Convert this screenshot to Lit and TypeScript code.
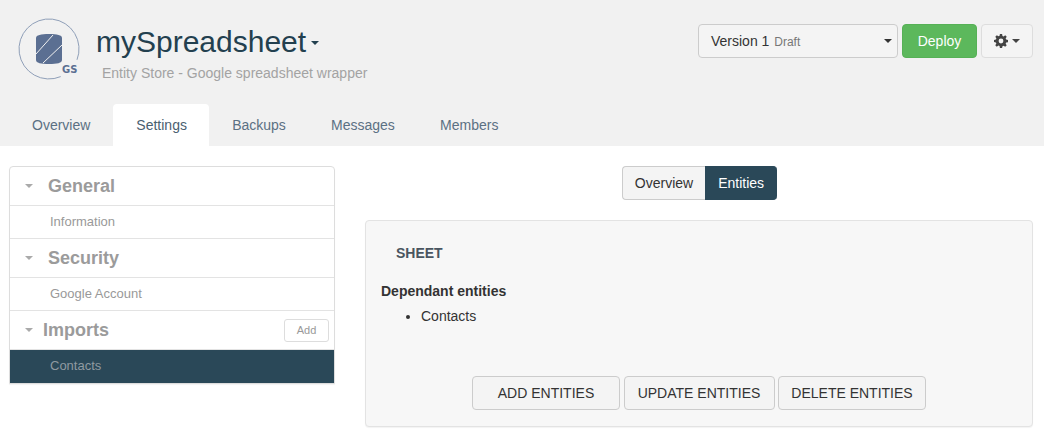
import { LitElement, html, css } from 'lit';
import { customElement } from 'lit/decorators.js';

const caret = html`<span class="caret"></span>`;

@customElement('app-root')
class AppRoot extends LitElement {
  static styles = css`
    :host {
      display: block;
      width: 1044px;
      height: 432px;
      overflow: hidden;
      background: #fff;
      font-family: "Liberation Sans", Arial, sans-serif;
      font-size: 14px;
      line-height: 20px;
      color: #333;
    }
    * { box-sizing: border-box; }
    .caret {
      display: inline-block;
      width: 0;
      height: 0;
      border-top: 4px solid currentColor;
      border-left: 4px solid transparent;
      border-right: 4px solid transparent;
    }

    .header { height: 146px; background: #f1f1f1; display: flex; flex-direction: column; }
    .top { height: 104px; display: flex; padding: 18px 11px 0 18px; }
    .logo { width: 64px; height: 64px; flex: none; }
    .titles { margin-left: 14px; flex: 1; }
    .title { font-size: 30px; line-height: 33px; margin-top: 7px; color: #23404f; display: flex; align-items: center; }
    .title .caret { margin-left: 5px; margin-top: 3px; }
    .sub { margin: 5px 0 0 6px; color: #a3a3a3; }
    .actions { display: flex; gap: 4px; margin-top: 6px; height: 34px; }
    .btn {
      height: 34px;
      border: 1px solid #ccc;
      border-radius: 4px;
      background: #f4f4f4;
      color: #333;
      display: flex;
      align-items: center;
      font: inherit;
      padding: 0 12px;
    }
    .version { width: 200px; padding: 0 5px 0 12px; justify-content: space-between; }
    .version small { font-size: 12px; color: #777; margin-left: 1px; }
    .deploy { width: 75px; justify-content: center; background: #5cb85c; border-color: #56b156; color: #fff; }
    .gear { width: 52px; border-color: #ddd; justify-content: center; gap: 4px; padding: 0; color: #444; }

    .tabs { display: flex; height: 42px; padding-left: 9px; color: #5b7083; }
    .tab { padding: 11px 22.2px 11px 23px; border-radius: 4px 4px 0 0; }
    .tab:first-child { padding-right: 23px; }
    .tab.on { background: #fff; color: #4a6070; }

    .body { display: flex; padding: 20px 11px 0 9px; gap: 30px; align-items: flex-start; }
    .side {
      width: 326px;
      flex: none;
      border: 1px solid #ddd;
      border-radius: 4px 4px 0 0;
      box-shadow: 0 1px 1px rgba(0, 0, 0, 0.05);
      overflow: hidden;
      color: #999;
    }
    .group {
      height: 38px;
      display: flex;
      align-items: center;
      padding: 0 5px 0 15px;
      font-size: 18px;
      font-weight: bold;
      color: #9b9b9b;
    }
    .group .caret { color: #aaa; margin-right: 15px; }
    .group.tight .caret { margin-right: 10px; }
    .item { height: 34px; padding: 6px 40px; font-size: 13px; border-top: 1px solid #e3e3e3; border-bottom: 1px solid #e3e3e3; color: #999; }
    .item.on { background: #2a4858; border-bottom-color: #2a4858; color: #8f9aa1; }
    .add {
      margin-left: auto;
      width: 45px;
      height: 23px;
      border: 1px solid #ddd;
      border-radius: 3px;
      background: #fff;
      font-size: 11px;
      font-weight: normal;
      color: #999;
      display: flex;
      align-items: center;
      justify-content: center;
    }

    .main { flex: 1; }
    .switch { display: flex; justify-content: center; height: 34px; margin-bottom: 20px; padding-left: 1px; }
    .switch .btn { border-radius: 4px 0 0 4px; border-right: 0; }
    .switch .btn.on { width: 72px; background: #2a4858; border-color: #2a4858; color: #fff; border-radius: 0 4px 4px 0; }
    .panel {
      height: 207px;
      border: 1px solid #e3e3e3;
      border-radius: 4px;
      background: #f7f7f7;
      box-shadow: 0 1px 1px rgba(0, 0, 0, 0.05);
      padding: 22px 15px 0;
      display: flex;
      flex-direction: column;
    }
    .sheet { font-weight: bold; color: #4a5560; padding-left: 15px; }
    .dep { font-weight: bold; margin-top: 18px; }
    ul { margin: 5px 0 0; padding-left: 40px; }
    .row { margin-top: auto; margin-bottom: 16px; display: grid; grid-template-columns: 148px 151px 148px; justify-content: center; gap: 3.5px; }
    .row .btn { padding: 0; justify-content: center; }
  `;

  render() {
    return html`
      <div class="header">
        <div class="top">
          <svg class="logo" viewBox="0 0 64 64">
            <path d="M42.700 58.600A30 30 0 1 1 59 41.800" fill="none" stroke="#8f9fb8" stroke-width="1"/>
            <path d="M18 20c0-3 5-4 13-4s13 1 13 4v22c0 3-5 4-13 4s-13-1-13-4z" fill="#5b6f92"/>
            <path d="M18 36L35 17M25 45L44 27" stroke="#f1f1f1" stroke-width="1" fill="none"/>
            <text x="44" y="55" font-family="DejaVu Sans" font-size="10" font-weight="bold" fill="#5b6f92">GS</text>
          </svg>
          <div class="titles">
            <div class="title">mySpreadsheet${caret}</div>
            <div class="sub">Entity Store - Google spreadsheet wrapper</div>
          </div>
          <div class="actions">
            <div class="btn version"><span>Version 1 <small>Draft</small></span>${caret}</div>
            <div class="btn deploy">Deploy</div>
            <div class="btn gear">
              <svg width="14" height="14" viewBox="0 0 14 14">
                <path fill-rule="evenodd" fill="#444" d="M5.900 0h2.200l.35 1.900 1.150.5 1.600-1.100 1.550 1.550-1.100 1.600.5 1.150 1.850.35v2.200l-1.850.35-.5 1.150 1.100 1.600-1.550 1.550-1.600-1.100-1.150.5L8.100 14H5.900l-.35-1.900-1.150-.5-1.600 1.100-1.550-1.550 1.100-1.600-.5-1.150L0 8.100V5.900l1.900-.35.5-1.150-1.100-1.600L2.850 1.250l1.600 1.100 1.150-.5zM7 4.600a2.400 2.400 0 1 0 0 4.800 2.400 2.400 0 0 0 0-4.800z"/>
              </svg>
              ${caret}
            </div>
          </div>
        </div>
        <div class="tabs">
          <div class="tab">Overview</div>
          <div class="tab on">Settings</div>
          <div class="tab">Backups</div>
          <div class="tab">Messages</div>
          <div class="tab">Members</div>
        </div>
      </div>
      <div class="body">
        <div class="side">
          <div class="group">${caret}General</div>
          <div class="item">Information</div>
          <div class="group">${caret}Security</div>
          <div class="item">Google Account</div>
          <div class="group tight">${caret}Imports<span class="add">Add</span></div>
          <div class="item on">Contacts</div>
        </div>
        <div class="main">
          <div class="switch">
            <div class="btn">Overview</div>
            <div class="btn on">Entities</div>
          </div>
          <div class="panel">
            <div class="sheet">SHEET</div>
            <div class="dep">Dependant entities</div>
            <ul><li>Contacts</li></ul>
            <div class="row">
              <div class="btn">ADD ENTITIES</div>
              <div class="btn">UPDATE ENTITIES</div>
              <div class="btn">DELETE ENTITIES</div>
            </div>
          </div>
        </div>
      </div>
    `;
  }
}
